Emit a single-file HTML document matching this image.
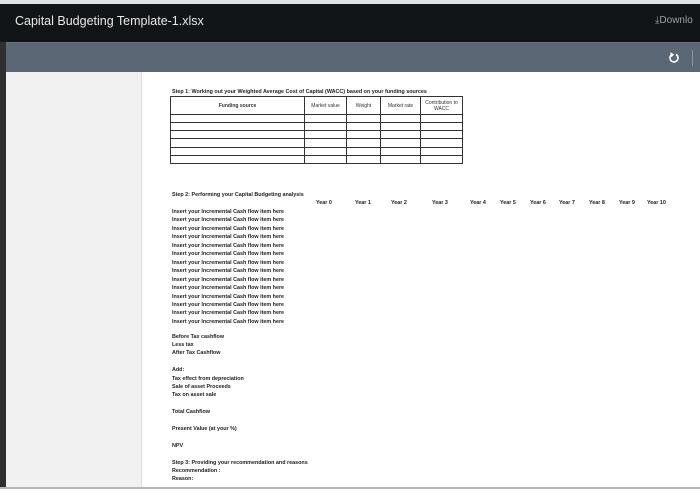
<!DOCTYPE html>
<html><head><style>
*{margin:0;padding:0;box-sizing:border-box}
body{width:700px;height:497px;background:#fff;position:relative;overflow:hidden;font-family:"Liberation Sans",sans-serif}
.a{position:absolute}
.t{position:absolute;font-size:5.4px;font-weight:bold;color:#222;white-space:nowrap;line-height:6px}
td{border:0.8px solid #333;padding:0}
</style></head><body>
<div class="a" style="left:0;top:0;width:700px;height:4px;background:#dfe3e8"></div>
<div class="a" style="left:0;top:4px;width:700px;height:38px;background:#121518"></div>
<div class="a" style="left:15px;top:14px;color:#e8e8e8;font-size:12.5px">Capital Budgeting Template-1.xlsx</div>
<div class="a" style="left:655px;top:15px;color:#9aa0a8;font-size:10px">&#10515;Downlo</div>
<div class="a" style="left:0;top:42px;width:700px;height:1px;background:#6b7580"></div>
<div class="a" style="left:6px;top:43px;width:694px;height:29px;background:#5b6775"></div>
<div class="a" style="left:0;top:42px;width:6px;height:446px;background:#2f2f2f"></div>
<svg class="a" style="left:668px;top:52px" width="12" height="12" viewBox="0 0 12 12"><path d="M4 2.5A4 4 0 1 0 8 2.5" fill="none" stroke="#fff" stroke-width="1.6"/><path d="M2.5 1L5 2.7 3 4.6" fill="none" stroke="#fff" stroke-width="1.4"/></svg>
<div class="a" style="left:692px;top:50px;width:1px;height:16px;background:#8a949e"></div>
<div class="a" style="left:6px;top:72px;width:135px;height:415px;background:#f1f1f1"></div>
<div class="a" style="left:141px;top:72px;width:1px;height:415px;background:#e0e0e0"></div>
<div class="a" style="left:0;top:487px;width:700px;height:2px;background:#b8b8b8"></div>

<div class="t" style="left:172px;top:89px">Step 1: Working out your Weighted Average Cost of Capital (WACC) based on your funding sources</div>
<table class="a" style="left:170px;top:96px;width:293px;height:68px;border-collapse:collapse;font-size:5px;text-align:center;color:#333">
<tr style="height:18px"><td style="width:134px;font-weight:bold">Funding source</td><td style="width:42px">Market value</td><td style="width:34px">Weight</td><td style="width:40px">Market rate</td><td>Contribution to<br>WACC</td></tr>
<tr><td></td><td></td><td></td><td></td><td></td></tr>
<tr><td></td><td></td><td></td><td></td><td></td></tr>
<tr><td></td><td></td><td></td><td></td><td></td></tr>
<tr><td></td><td></td><td></td><td></td><td></td></tr>
<tr><td></td><td></td><td></td><td></td><td></td></tr>
<tr><td></td><td></td><td></td><td></td><td></td></tr>
</table>

<div class="t" style="left:172px;top:192px">Step 2: Performing your Capital Budgeting analysis</div>
<div class="t" style="left:316px;top:200px">Year 0</div>
<div class="t" style="left:355px;top:200px">Year 1</div>
<div class="t" style="left:391px;top:200px">Year 2</div>
<div class="t" style="left:432px;top:200px">Year 3</div>
<div class="t" style="left:470px;top:200px">Year 4</div>
<div class="t" style="left:500px;top:200px">Year 5</div>
<div class="t" style="left:530px;top:200px">Year 6</div>
<div class="t" style="left:559px;top:200px">Year 7</div>
<div class="t" style="left:589px;top:200px">Year 8</div>
<div class="t" style="left:619px;top:200px">Year 9</div>
<div class="t" style="left:647px;top:200px">Year 10</div>
<div class="t" style="left:172px;top:208px;line-height:8.45px">Insert your Incremental Cash flow item here<br>Insert your Incremental Cash flow item here<br>Insert your Incremental Cash flow item here<br>Insert your Incremental Cash flow item here<br>Insert your Incremental Cash flow item here<br>Insert your Incremental Cash flow item here<br>Insert your Incremental Cash flow item here<br>Insert your Incremental Cash flow item here<br>Insert your Incremental Cash flow item here<br>Insert your Incremental Cash flow item here<br>Insert your Incremental Cash flow item here<br>Insert your Incremental Cash flow item here<br>Insert your Incremental Cash flow item here<br>Insert your Incremental Cash flow item here</div>
<div class="t" style="left:172px;top:334px">Before Tax cashflow</div>
<div class="t" style="left:172px;top:342px">Less tax</div>
<div class="t" style="left:172px;top:350px">After Tax Cashflow</div>
<div class="t" style="left:172px;top:367px">Add:</div>
<div class="t" style="left:172px;top:376px">Tax effect from depreciation</div>
<div class="t" style="left:172px;top:384px">Sale of asset Proceeds</div>
<div class="t" style="left:172px;top:392px">Tax on asset sale</div>
<div class="t" style="left:172px;top:409px">Total Cashflow</div>
<div class="t" style="left:172px;top:426px">Present Value (at your %)</div>
<div class="t" style="left:172px;top:443px">NPV</div>
<div class="t" style="left:172px;top:460px">Step 3: Providing your recommendation and reasons</div>
<div class="t" style="left:172px;top:468px">Recommendation :</div>
<div class="t" style="left:172px;top:476px">Reason:</div>
</body></html>
